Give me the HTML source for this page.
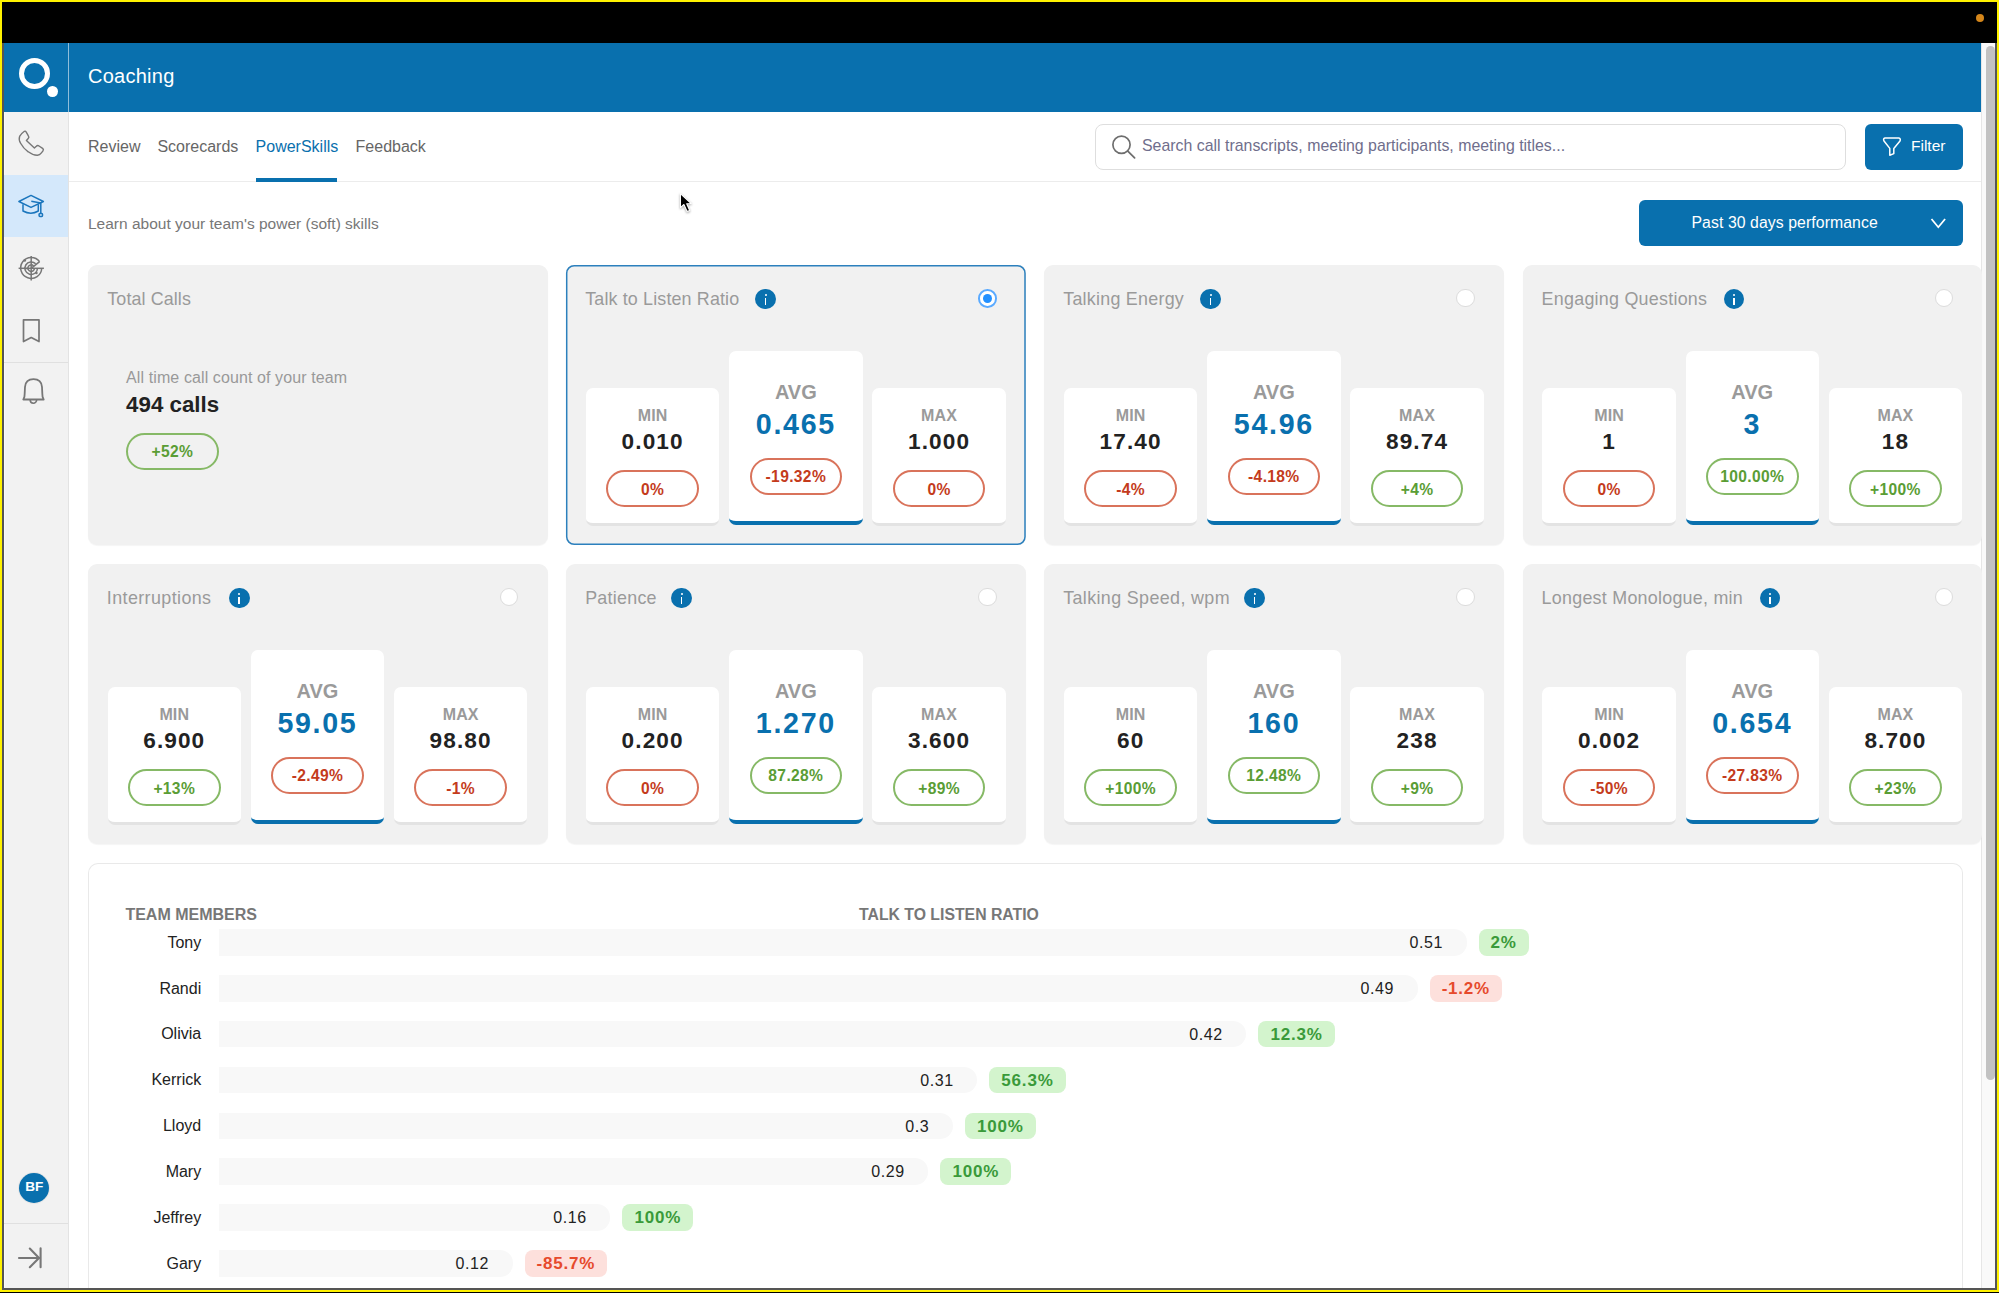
<!DOCTYPE html>
<html><head><meta charset="utf-8"><style>
html,body{margin:0;padding:0}
body{width:1999px;height:1293px;position:relative;overflow:hidden;background:#fff200;font-family:"Liberation Sans", sans-serif}
</style></head><body>
<div style="position:absolute;left:2px;top:2px;width:1995px;height:1288px;background:#555"></div>
<div style="position:absolute;left:2px;top:2px;width:1995px;height:41px;background:#000"></div>
<div style="position:absolute;left:0px;top:1292px;width:1999px;height:1px;background:#000"></div>
<div style="position:absolute;left:1976.4px;top:14.3px;width:8px;height:8px;background:#d4861a;border-radius:50%"></div>
<div style="position:absolute;left:4px;top:43px;width:1991px;height:1245px;background:#fff"></div>
<div style="position:absolute;left:3.5px;top:43px;width:1978px;height:69px;background:#0970ae"></div>
<div style="position:absolute;left:68px;top:43px;width:1px;height:69px;background:rgba(255,255,255,0.55)"></div>
<div style="position:absolute;left:18.6px;top:57.7px;width:21.4px;height:21.4px;border:5.5px solid #fff;border-radius:50%;box-sizing:content-box"></div>
<div style="position:absolute;left:47px;top:86.3px;width:10.8px;height:10.8px;background:#fff;border-radius:50%"></div>
<div style="position:absolute;left:88px;top:66.36px;font-size:20px;line-height:20px;color:#fff;font-weight:400;white-space:nowrap;letter-spacing:0.25px;">Coaching</div>
<div style="position:absolute;left:4px;top:112px;width:64px;height:1176px;background:#f2f2f2"></div>
<div style="position:absolute;left:4px;top:112px;width:1px;height:1176px;background:#fafafa"></div>
<div style="position:absolute;left:68px;top:112px;width:1px;height:1176px;background:#e3e3e3"></div>
<div style="position:absolute;left:4px;top:175px;width:64px;height:62px;background:#d4e8fb"></div>
<div style="position:absolute;left:4px;top:362px;width:64px;height:1px;background:#e0e0e0"></div>
<div style="position:absolute;left:4px;top:1223px;width:64px;height:1px;background:#e0e0e0"></div>
<div style="position:absolute;left:1981.3px;top:43px;width:13.7px;height:1245px;background:#f9f9f9;border-left:1px solid #e6e6e6;box-sizing:border-box"></div>
<div style="position:absolute;left:1986px;top:46.2px;width:8.6px;height:1034px;background:#c2c2c2;border-radius:5px"></div>
<div style="position:absolute;left:88px;top:139.45px;font-size:16px;line-height:16px;color:#666;font-weight:400;white-space:nowrap;">Review</div>
<div style="position:absolute;left:157.4px;top:139.45px;font-size:16px;line-height:16px;color:#666;font-weight:400;white-space:nowrap;">Scorecards</div>
<div style="position:absolute;left:255.6px;top:139.45px;font-size:16px;line-height:16px;color:#0970ae;font-weight:400;white-space:nowrap;">PowerSkills</div>
<div style="position:absolute;left:355.6px;top:139.45px;font-size:16px;line-height:16px;color:#666;font-weight:400;white-space:nowrap;">Feedback</div>
<div style="position:absolute;left:69px;top:180.5px;width:1912.3px;height:1.5px;background:#ececec"></div>
<div style="position:absolute;left:255.6px;top:178px;width:81.4px;height:3.5px;background:#0970ae"></div>
<div style="position:absolute;left:1095.2px;top:124px;width:751.2px;height:45.5px;border:1px solid #dedede;border-radius:8px;box-sizing:border-box;background:#fff"></div>
<svg style="position:absolute;left:1108px;top:132px" width="32" height="32" viewBox="1108 132 32 32"><circle cx="1121.5" cy="144.8" r="8.6" fill="none" stroke="#6e6e6e" stroke-width="1.7"/><line x1="1127.8" y1="151.1" x2="1134.6" y2="157.9" stroke="#6e6e6e" stroke-width="1.8" stroke-linecap="round"/></svg>
<div style="position:absolute;left:1142px;top:138.13px;font-size:15.9px;line-height:15.9px;color:#6f6e8c;font-weight:400;white-space:nowrap;">Search call transcripts, meeting participants, meeting titles...</div>
<div style="position:absolute;left:1865.3px;top:124px;width:98px;height:45.8px;background:#0970ae;border-radius:6px"></div>
<svg style="position:absolute;left:1878px;top:132px" width="28" height="28" viewBox="1878 132 28 28"><path d="M1885 138 L1898.8 138 Q1901 138.5 1900 141 L1893.8 148.4 L1893.8 153.6 L1889.8 155.2 L1889.8 148.4 L1884 141 Q1882.8 138.5 1885 138 Z" fill="none" stroke="#fff" stroke-width="1.5" stroke-linejoin="round"/></svg>
<div style="position:absolute;left:1911px;top:138.37px;font-size:15.5px;line-height:15.5px;color:#fff;font-weight:400;white-space:nowrap;">Filter</div>
<div style="position:absolute;left:88px;top:215.87px;font-size:15.5px;line-height:15.5px;color:#777;font-weight:400;white-space:nowrap;">Learn about your team's power (soft) skills</div>
<div style="position:absolute;left:1639.2px;top:200.3px;width:324px;height:45.7px;background:#0970ae;border-radius:6px"></div>
<div style="position:absolute;left:1691.5px;top:214.92px;font-size:15.8px;line-height:15.8px;color:#fff;font-weight:400;white-space:nowrap;letter-spacing:0.08px;">Past 30 days performance</div>
<svg style="position:absolute;left:1926px;top:212px" width="24" height="22" viewBox="1926 212 24 22"><polyline points="1931.5,219 1938.3,227.2 1945.1,219" fill="none" stroke="#fff" stroke-width="1.8" stroke-linejoin="miter"/></svg>
<svg style="position:absolute;left:0px;top:112px" width="68" height="1176" viewBox="0 112 68 1176"><path d="M24.4,131.3 C22.6,132.6 20.6,134.5 19.6,136.4 C18.8,138.4 19.4,141 20.6,143.3 C22.2,146.3 25,149.6 28.2,151.8 C31.2,154 34.6,155.4 37.4,155.3 C39,155.2 40.4,154.2 41.4,152.9 L43,150.8 C43.6,150 43.4,149 42.6,148.4 L39,146 C38.1,145.4 37.1,145.5 36.3,146.3 L34.4,148.1 L26.4,140.5 L28.2,138.6 C28.9,137.9 29,136.9 28.5,136.1 L26.1,131.9 C25.6,131.1 25,130.9 24.4,131.3 Z" fill="none" stroke="#777" stroke-width="1.4" stroke-linejoin="round"/><g fill="none" stroke="#1b76bd" stroke-width="1.5" stroke-linejoin="round"><path d="M18.9,201.5 L31,195.4 L43.4,201.5 L31,207.4 Z"/><path d="M23,204.3 L23,211 Q31,215.5 38.3,211 L38.3,204.3"/><path d="M31.3,201.2 L40.8,202.9 L40.8,213.2"/><rect x="39.1" y="213.4" width="3.4" height="3" rx="0.8"/></g><g fill="none" stroke="#777" stroke-width="1.5"><path d="M39.6,261.6 A10.5,10.5 0 1 0 41.7,268.3"/><path d="M35.7,263.8 A6.3,6.3 0 1 0 37.5,268.3"/><path d="M33.6,265.9 A3.3,3.3 0 1 0 34.5,268.3"/><line x1="31.2" y1="256" x2="31.2" y2="280.6"/><line x1="18.6" y1="268.3" x2="43.9" y2="268.3"/><line x1="31.2" y1="268.3" x2="39.6" y2="261.6"/></g><circle cx="24.8" cy="260.5" r="1.3" fill="#777"/><circle cx="36.4" cy="273" r="1.3" fill="#777"/><circle cx="27.2" cy="268.4" r="1" fill="#777"/><path d="M23.5,319.8 L39.0,319.8 L39.0,341.6 L31.2,337.6 L23.5,341.6 Z" fill="none" stroke="#777" stroke-width="1.7" stroke-linejoin="round"/><path d="M23.3,399.5 L43.7,399.5 L42.6,396.8 C42.2,394 42.2,390 42,387 C41.6,381.8 38,379.2 33.5,379.2 C29,379.2 25.4,381.8 25,387 C24.8,390 24.8,394 24.4,396.8 Z" fill="none" stroke="#777" stroke-width="1.8" stroke-linejoin="round"/><path d="M30.2,400 A3.2,3.2 0 0 0 36.6,400" fill="none" stroke="#777" stroke-width="1.6"/><g fill="none" stroke="#777" stroke-width="2.1" stroke-linecap="round" stroke-linejoin="round"><line x1="19" y1="1258" x2="39" y2="1258"/><polyline points="29.8,1248.6 39,1258 29.8,1267.2"/><line x1="40.6" y1="1248.4" x2="40.6" y2="1267.2"/></g></svg>
<div style="position:absolute;left:19.3px;top:1173px;width:30px;height:30px;background:#0970ae;border-radius:50%;box-shadow:0 0 0 1px #e6e6e6"></div>
<div style="position:absolute;left:14.299999999999997px;width:40px;text-align:center;top:1180.48px;font-size:13.6px;line-height:13.6px;color:#fff;font-weight:700;white-space:nowrap;">BF</div>
<div style="position:absolute;left:88px;top:265px;width:459.7px;height:280px;background:#f1f1f1;border-radius:9px;box-shadow:0 1px 1px rgba(0,0,0,0.04)"></div>
<div style="position:absolute;left:107.3px;top:290.94px;font-size:17.9px;line-height:17.9px;color:#9a9a9a;font-weight:400;white-space:nowrap;letter-spacing:0.1px;">Total Calls</div>
<div style="position:absolute;left:126.1px;top:370.45px;font-size:16px;line-height:16px;color:#999;font-weight:400;white-space:nowrap;letter-spacing:0.1px;">All time call count of your team</div>
<div style="position:absolute;left:126.1px;top:393.81px;font-size:22.3px;line-height:22.3px;color:#222;font-weight:700;white-space:nowrap;">494 calls</div>
<div style="position:absolute;left:126.10px;top:433.20px;width:92.7px;height:37.2px;border:2px solid #86b966;border-radius:20px;box-sizing:border-box"></div>
<div style="position:absolute;left:112.44999999999999px;width:120px;text-align:center;top:444.39px;font-size:15.6px;line-height:15.6px;color:#5a9d35;font-weight:700;white-space:nowrap;letter-spacing:0.35px;">+52%</div>
<div style="position:absolute;left:566.4px;top:265px;width:459.7px;height:280px;background:#f1f1f1;border-radius:8px"></div>
<svg style="position:absolute;left:565.4px;top:264px" width="461.7" height="282"><rect x="1.7" y="1.7" width="458.3" height="278.6" rx="7.5" fill="none" stroke="#2c80bd" stroke-width="1.5"/></svg>
<div style="position:absolute;left:585.1999999999999px;top:290.94px;font-size:17.9px;line-height:17.9px;color:#9a9a9a;font-weight:400;white-space:nowrap;letter-spacing:0.15px;">Talk to Listen Ratio</div>
<div style="position:absolute;left:755.20px;top:288.60px;width:20.8px;height:20.8px;border-radius:50%;background:#0970ae"></div>
<div style="position:absolute;left:764.60px;top:294.40px;width:2.0px;height:2.0px;border-radius:50%;background:#fff"></div>
<div style="position:absolute;left:764.70px;top:297.70px;width:1.8px;height:7px;background:#fff"></div>
<div style="position:absolute;left:978.10px;top:289.00px;width:18.6px;height:18.6px;border-radius:50%;background:#fff;border:2px solid #5aaaff;box-sizing:border-box"></div>
<div style="position:absolute;left:982.70px;top:293.60px;width:9.4px;height:9.4px;border-radius:50%;background:#2290ff"></div>
<div style="position:absolute;left:585.90px;top:387.50px;width:133.5px;height:138.00px;background:#fff;border-radius:7px;border-bottom:3.4px solid #e3e3e3;box-sizing:border-box"></div>
<div style="position:absolute;left:592.65px;width:120px;text-align:center;top:407.95px;font-size:16px;line-height:16px;color:#9a9a9a;font-weight:700;white-space:nowrap;letter-spacing:0.1px;">MIN</div>
<div style="position:absolute;left:587.65px;width:130px;text-align:center;top:431.16px;font-size:22.6px;line-height:22.6px;color:#222;font-weight:700;white-space:nowrap;letter-spacing:1.1px;">0.010</div>
<div style="position:absolute;left:606.40px;top:470.40px;width:92.5px;height:36.8px;border:2px solid #d9735b;border-radius:20px;box-sizing:border-box"></div>
<div style="position:absolute;left:592.65px;width:120px;text-align:center;top:481.59px;font-size:15.6px;line-height:15.6px;color:#c43b1c;font-weight:700;white-space:nowrap;letter-spacing:0.35px;">0%</div>
<div style="position:absolute;left:729.10px;top:350.60px;width:133.5px;height:174.90px;background:#fff;border-radius:7px;border-bottom:4.8px solid #0970ae;box-sizing:border-box"></div>
<div style="position:absolute;left:735.8499999999999px;width:120px;text-align:center;top:381.66px;font-size:20px;line-height:20px;color:#9a9a9a;font-weight:700;white-space:nowrap;">AVG</div>
<div style="position:absolute;left:730.8499999999999px;width:130px;text-align:center;top:409.78px;font-size:28.6px;line-height:28.6px;color:#0970ae;font-weight:700;white-space:nowrap;letter-spacing:1.7px;">0.465</div>
<div style="position:absolute;left:749.60px;top:457.90px;width:92.5px;height:36.8px;border:2px solid #d9735b;border-radius:20px;box-sizing:border-box"></div>
<div style="position:absolute;left:735.8499999999999px;width:120px;text-align:center;top:469.09px;font-size:15.6px;line-height:15.6px;color:#c43b1c;font-weight:700;white-space:nowrap;letter-spacing:0.35px;">-19.32%</div>
<div style="position:absolute;left:872.30px;top:387.50px;width:133.5px;height:138.00px;background:#fff;border-radius:7px;border-bottom:3.4px solid #e3e3e3;box-sizing:border-box"></div>
<div style="position:absolute;left:879.05px;width:120px;text-align:center;top:407.95px;font-size:16px;line-height:16px;color:#9a9a9a;font-weight:700;white-space:nowrap;letter-spacing:0.1px;">MAX</div>
<div style="position:absolute;left:874.05px;width:130px;text-align:center;top:431.16px;font-size:22.6px;line-height:22.6px;color:#222;font-weight:700;white-space:nowrap;letter-spacing:1.1px;">1.000</div>
<div style="position:absolute;left:892.80px;top:470.40px;width:92.5px;height:36.8px;border:2px solid #d9735b;border-radius:20px;box-sizing:border-box"></div>
<div style="position:absolute;left:879.05px;width:120px;text-align:center;top:481.59px;font-size:15.6px;line-height:15.6px;color:#c43b1c;font-weight:700;white-space:nowrap;letter-spacing:0.35px;">0%</div>
<div style="position:absolute;left:1044.4px;top:265px;width:459.7px;height:280px;background:#f1f1f1;border-radius:9px;box-shadow:0 1px 1px rgba(0,0,0,0.04)"></div>
<div style="position:absolute;left:1063.2px;top:290.94px;font-size:17.9px;line-height:17.9px;color:#9a9a9a;font-weight:400;white-space:nowrap;letter-spacing:0.25px;">Talking Energy</div>
<div style="position:absolute;left:1200.20px;top:288.60px;width:20.8px;height:20.8px;border-radius:50%;background:#0970ae"></div>
<div style="position:absolute;left:1209.60px;top:294.40px;width:2.0px;height:2.0px;border-radius:50%;background:#fff"></div>
<div style="position:absolute;left:1209.70px;top:297.70px;width:1.8px;height:7px;background:#fff"></div>
<div style="position:absolute;left:1456.20px;top:289.10px;width:18.4px;height:18.4px;border-radius:50%;background:#fff;border:1px solid #dcdcdc;box-sizing:border-box"></div>
<div style="position:absolute;left:1063.90px;top:387.50px;width:133.5px;height:138.00px;background:#fff;border-radius:7px;border-bottom:3.4px solid #e3e3e3;box-sizing:border-box"></div>
<div style="position:absolute;left:1070.65px;width:120px;text-align:center;top:407.95px;font-size:16px;line-height:16px;color:#9a9a9a;font-weight:700;white-space:nowrap;letter-spacing:0.1px;">MIN</div>
<div style="position:absolute;left:1065.65px;width:130px;text-align:center;top:431.16px;font-size:22.6px;line-height:22.6px;color:#222;font-weight:700;white-space:nowrap;letter-spacing:1.1px;">17.40</div>
<div style="position:absolute;left:1084.40px;top:470.40px;width:92.5px;height:36.8px;border:2px solid #d9735b;border-radius:20px;box-sizing:border-box"></div>
<div style="position:absolute;left:1070.65px;width:120px;text-align:center;top:481.59px;font-size:15.6px;line-height:15.6px;color:#c43b1c;font-weight:700;white-space:nowrap;letter-spacing:0.35px;">-4%</div>
<div style="position:absolute;left:1207.10px;top:350.60px;width:133.5px;height:174.90px;background:#fff;border-radius:7px;border-bottom:4.8px solid #0970ae;box-sizing:border-box"></div>
<div style="position:absolute;left:1213.8500000000001px;width:120px;text-align:center;top:381.66px;font-size:20px;line-height:20px;color:#9a9a9a;font-weight:700;white-space:nowrap;">AVG</div>
<div style="position:absolute;left:1208.8500000000001px;width:130px;text-align:center;top:409.78px;font-size:28.6px;line-height:28.6px;color:#0970ae;font-weight:700;white-space:nowrap;letter-spacing:1.7px;">54.96</div>
<div style="position:absolute;left:1227.60px;top:457.90px;width:92.5px;height:36.8px;border:2px solid #d9735b;border-radius:20px;box-sizing:border-box"></div>
<div style="position:absolute;left:1213.8500000000001px;width:120px;text-align:center;top:469.09px;font-size:15.6px;line-height:15.6px;color:#c43b1c;font-weight:700;white-space:nowrap;letter-spacing:0.35px;">-4.18%</div>
<div style="position:absolute;left:1350.30px;top:387.50px;width:133.5px;height:138.00px;background:#fff;border-radius:7px;border-bottom:3.4px solid #e3e3e3;box-sizing:border-box"></div>
<div style="position:absolute;left:1357.0500000000002px;width:120px;text-align:center;top:407.95px;font-size:16px;line-height:16px;color:#9a9a9a;font-weight:700;white-space:nowrap;letter-spacing:0.1px;">MAX</div>
<div style="position:absolute;left:1352.0500000000002px;width:130px;text-align:center;top:431.16px;font-size:22.6px;line-height:22.6px;color:#222;font-weight:700;white-space:nowrap;letter-spacing:1.1px;">89.74</div>
<div style="position:absolute;left:1370.80px;top:470.40px;width:92.5px;height:36.8px;border:2px solid #86b966;border-radius:20px;box-sizing:border-box"></div>
<div style="position:absolute;left:1357.0500000000002px;width:120px;text-align:center;top:481.59px;font-size:15.6px;line-height:15.6px;color:#5a9d35;font-weight:700;white-space:nowrap;letter-spacing:0.35px;">+4%</div>
<div style="position:absolute;left:1522.8px;top:265px;width:459.7px;height:280px;background:#f1f1f1;border-radius:9px;box-shadow:0 1px 1px rgba(0,0,0,0.04)"></div>
<div style="position:absolute;left:1541.6px;top:290.94px;font-size:17.9px;line-height:17.9px;color:#9a9a9a;font-weight:400;white-space:nowrap;letter-spacing:0.25px;">Engaging Questions</div>
<div style="position:absolute;left:1723.60px;top:288.60px;width:20.8px;height:20.8px;border-radius:50%;background:#0970ae"></div>
<div style="position:absolute;left:1733.00px;top:294.40px;width:2.0px;height:2.0px;border-radius:50%;background:#fff"></div>
<div style="position:absolute;left:1733.10px;top:297.70px;width:1.8px;height:7px;background:#fff"></div>
<div style="position:absolute;left:1934.60px;top:289.10px;width:18.4px;height:18.4px;border-radius:50%;background:#fff;border:1px solid #dcdcdc;box-sizing:border-box"></div>
<div style="position:absolute;left:1542.30px;top:387.50px;width:133.5px;height:138.00px;background:#fff;border-radius:7px;border-bottom:3.4px solid #e3e3e3;box-sizing:border-box"></div>
<div style="position:absolute;left:1549.05px;width:120px;text-align:center;top:407.95px;font-size:16px;line-height:16px;color:#9a9a9a;font-weight:700;white-space:nowrap;letter-spacing:0.1px;">MIN</div>
<div style="position:absolute;left:1544.05px;width:130px;text-align:center;top:431.16px;font-size:22.6px;line-height:22.6px;color:#222;font-weight:700;white-space:nowrap;letter-spacing:1.1px;">1</div>
<div style="position:absolute;left:1562.80px;top:470.40px;width:92.5px;height:36.8px;border:2px solid #d9735b;border-radius:20px;box-sizing:border-box"></div>
<div style="position:absolute;left:1549.05px;width:120px;text-align:center;top:481.59px;font-size:15.6px;line-height:15.6px;color:#c43b1c;font-weight:700;white-space:nowrap;letter-spacing:0.35px;">0%</div>
<div style="position:absolute;left:1685.50px;top:350.60px;width:133.5px;height:174.90px;background:#fff;border-radius:7px;border-bottom:4.8px solid #0970ae;box-sizing:border-box"></div>
<div style="position:absolute;left:1692.25px;width:120px;text-align:center;top:381.66px;font-size:20px;line-height:20px;color:#9a9a9a;font-weight:700;white-space:nowrap;">AVG</div>
<div style="position:absolute;left:1687.25px;width:130px;text-align:center;top:409.78px;font-size:28.6px;line-height:28.6px;color:#0970ae;font-weight:700;white-space:nowrap;letter-spacing:1.7px;">3</div>
<div style="position:absolute;left:1706.00px;top:457.90px;width:92.5px;height:36.8px;border:2px solid #86b966;border-radius:20px;box-sizing:border-box"></div>
<div style="position:absolute;left:1692.25px;width:120px;text-align:center;top:469.09px;font-size:15.6px;line-height:15.6px;color:#5a9d35;font-weight:700;white-space:nowrap;letter-spacing:0.35px;">100.00%</div>
<div style="position:absolute;left:1828.70px;top:387.50px;width:133.5px;height:138.00px;background:#fff;border-radius:7px;border-bottom:3.4px solid #e3e3e3;box-sizing:border-box"></div>
<div style="position:absolute;left:1835.4499999999998px;width:120px;text-align:center;top:407.95px;font-size:16px;line-height:16px;color:#9a9a9a;font-weight:700;white-space:nowrap;letter-spacing:0.1px;">MAX</div>
<div style="position:absolute;left:1830.4499999999998px;width:130px;text-align:center;top:431.16px;font-size:22.6px;line-height:22.6px;color:#222;font-weight:700;white-space:nowrap;letter-spacing:1.1px;">18</div>
<div style="position:absolute;left:1849.20px;top:470.40px;width:92.5px;height:36.8px;border:2px solid #86b966;border-radius:20px;box-sizing:border-box"></div>
<div style="position:absolute;left:1835.4499999999998px;width:120px;text-align:center;top:481.59px;font-size:15.6px;line-height:15.6px;color:#5a9d35;font-weight:700;white-space:nowrap;letter-spacing:0.35px;">+100%</div>
<div style="position:absolute;left:88px;top:564px;width:459.7px;height:280px;background:#f1f1f1;border-radius:9px;box-shadow:0 1px 1px rgba(0,0,0,0.04)"></div>
<div style="position:absolute;left:106.8px;top:589.94px;font-size:17.9px;line-height:17.9px;color:#9a9a9a;font-weight:400;white-space:nowrap;letter-spacing:0.4px;">Interruptions</div>
<div style="position:absolute;left:228.80px;top:587.60px;width:20.8px;height:20.8px;border-radius:50%;background:#0970ae"></div>
<div style="position:absolute;left:238.20px;top:593.40px;width:2.0px;height:2.0px;border-radius:50%;background:#fff"></div>
<div style="position:absolute;left:238.30px;top:596.70px;width:1.8px;height:7px;background:#fff"></div>
<div style="position:absolute;left:499.80px;top:588.10px;width:18.4px;height:18.4px;border-radius:50%;background:#fff;border:1px solid #dcdcdc;box-sizing:border-box"></div>
<div style="position:absolute;left:107.50px;top:686.50px;width:133.5px;height:138.00px;background:#fff;border-radius:7px;border-bottom:3.4px solid #e3e3e3;box-sizing:border-box"></div>
<div style="position:absolute;left:114.25px;width:120px;text-align:center;top:706.95px;font-size:16px;line-height:16px;color:#9a9a9a;font-weight:700;white-space:nowrap;letter-spacing:0.1px;">MIN</div>
<div style="position:absolute;left:109.25px;width:130px;text-align:center;top:730.16px;font-size:22.6px;line-height:22.6px;color:#222;font-weight:700;white-space:nowrap;letter-spacing:1.1px;">6.900</div>
<div style="position:absolute;left:128.00px;top:769.40px;width:92.5px;height:36.8px;border:2px solid #86b966;border-radius:20px;box-sizing:border-box"></div>
<div style="position:absolute;left:114.25px;width:120px;text-align:center;top:780.59px;font-size:15.6px;line-height:15.6px;color:#5a9d35;font-weight:700;white-space:nowrap;letter-spacing:0.35px;">+13%</div>
<div style="position:absolute;left:250.70px;top:649.60px;width:133.5px;height:174.90px;background:#fff;border-radius:7px;border-bottom:4.8px solid #0970ae;box-sizing:border-box"></div>
<div style="position:absolute;left:257.45px;width:120px;text-align:center;top:680.66px;font-size:20px;line-height:20px;color:#9a9a9a;font-weight:700;white-space:nowrap;">AVG</div>
<div style="position:absolute;left:252.45px;width:130px;text-align:center;top:708.78px;font-size:28.6px;line-height:28.6px;color:#0970ae;font-weight:700;white-space:nowrap;letter-spacing:1.7px;">59.05</div>
<div style="position:absolute;left:271.20px;top:756.90px;width:92.5px;height:36.8px;border:2px solid #d9735b;border-radius:20px;box-sizing:border-box"></div>
<div style="position:absolute;left:257.45px;width:120px;text-align:center;top:768.09px;font-size:15.6px;line-height:15.6px;color:#c43b1c;font-weight:700;white-space:nowrap;letter-spacing:0.35px;">-2.49%</div>
<div style="position:absolute;left:393.90px;top:686.50px;width:133.5px;height:138.00px;background:#fff;border-radius:7px;border-bottom:3.4px solid #e3e3e3;box-sizing:border-box"></div>
<div style="position:absolute;left:400.65px;width:120px;text-align:center;top:706.95px;font-size:16px;line-height:16px;color:#9a9a9a;font-weight:700;white-space:nowrap;letter-spacing:0.1px;">MAX</div>
<div style="position:absolute;left:395.65px;width:130px;text-align:center;top:730.16px;font-size:22.6px;line-height:22.6px;color:#222;font-weight:700;white-space:nowrap;letter-spacing:1.1px;">98.80</div>
<div style="position:absolute;left:414.40px;top:769.40px;width:92.5px;height:36.8px;border:2px solid #d9735b;border-radius:20px;box-sizing:border-box"></div>
<div style="position:absolute;left:400.65px;width:120px;text-align:center;top:780.59px;font-size:15.6px;line-height:15.6px;color:#c43b1c;font-weight:700;white-space:nowrap;letter-spacing:0.35px;">-1%</div>
<div style="position:absolute;left:566.4px;top:564px;width:459.7px;height:280px;background:#f1f1f1;border-radius:9px;box-shadow:0 1px 1px rgba(0,0,0,0.04)"></div>
<div style="position:absolute;left:585.1999999999999px;top:589.94px;font-size:17.9px;line-height:17.9px;color:#9a9a9a;font-weight:400;white-space:nowrap;letter-spacing:0.25px;">Patience</div>
<div style="position:absolute;left:671.20px;top:587.60px;width:20.8px;height:20.8px;border-radius:50%;background:#0970ae"></div>
<div style="position:absolute;left:680.60px;top:593.40px;width:2.0px;height:2.0px;border-radius:50%;background:#fff"></div>
<div style="position:absolute;left:680.70px;top:596.70px;width:1.8px;height:7px;background:#fff"></div>
<div style="position:absolute;left:978.20px;top:588.10px;width:18.4px;height:18.4px;border-radius:50%;background:#fff;border:1px solid #dcdcdc;box-sizing:border-box"></div>
<div style="position:absolute;left:585.90px;top:686.50px;width:133.5px;height:138.00px;background:#fff;border-radius:7px;border-bottom:3.4px solid #e3e3e3;box-sizing:border-box"></div>
<div style="position:absolute;left:592.65px;width:120px;text-align:center;top:706.95px;font-size:16px;line-height:16px;color:#9a9a9a;font-weight:700;white-space:nowrap;letter-spacing:0.1px;">MIN</div>
<div style="position:absolute;left:587.65px;width:130px;text-align:center;top:730.16px;font-size:22.6px;line-height:22.6px;color:#222;font-weight:700;white-space:nowrap;letter-spacing:1.1px;">0.200</div>
<div style="position:absolute;left:606.40px;top:769.40px;width:92.5px;height:36.8px;border:2px solid #d9735b;border-radius:20px;box-sizing:border-box"></div>
<div style="position:absolute;left:592.65px;width:120px;text-align:center;top:780.59px;font-size:15.6px;line-height:15.6px;color:#c43b1c;font-weight:700;white-space:nowrap;letter-spacing:0.35px;">0%</div>
<div style="position:absolute;left:729.10px;top:649.60px;width:133.5px;height:174.90px;background:#fff;border-radius:7px;border-bottom:4.8px solid #0970ae;box-sizing:border-box"></div>
<div style="position:absolute;left:735.8499999999999px;width:120px;text-align:center;top:680.66px;font-size:20px;line-height:20px;color:#9a9a9a;font-weight:700;white-space:nowrap;">AVG</div>
<div style="position:absolute;left:730.8499999999999px;width:130px;text-align:center;top:708.78px;font-size:28.6px;line-height:28.6px;color:#0970ae;font-weight:700;white-space:nowrap;letter-spacing:1.7px;">1.270</div>
<div style="position:absolute;left:749.60px;top:756.90px;width:92.5px;height:36.8px;border:2px solid #86b966;border-radius:20px;box-sizing:border-box"></div>
<div style="position:absolute;left:735.8499999999999px;width:120px;text-align:center;top:768.09px;font-size:15.6px;line-height:15.6px;color:#5a9d35;font-weight:700;white-space:nowrap;letter-spacing:0.35px;">87.28%</div>
<div style="position:absolute;left:872.30px;top:686.50px;width:133.5px;height:138.00px;background:#fff;border-radius:7px;border-bottom:3.4px solid #e3e3e3;box-sizing:border-box"></div>
<div style="position:absolute;left:879.05px;width:120px;text-align:center;top:706.95px;font-size:16px;line-height:16px;color:#9a9a9a;font-weight:700;white-space:nowrap;letter-spacing:0.1px;">MAX</div>
<div style="position:absolute;left:874.05px;width:130px;text-align:center;top:730.16px;font-size:22.6px;line-height:22.6px;color:#222;font-weight:700;white-space:nowrap;letter-spacing:1.1px;">3.600</div>
<div style="position:absolute;left:892.80px;top:769.40px;width:92.5px;height:36.8px;border:2px solid #86b966;border-radius:20px;box-sizing:border-box"></div>
<div style="position:absolute;left:879.05px;width:120px;text-align:center;top:780.59px;font-size:15.6px;line-height:15.6px;color:#5a9d35;font-weight:700;white-space:nowrap;letter-spacing:0.35px;">+89%</div>
<div style="position:absolute;left:1044.4px;top:564px;width:459.7px;height:280px;background:#f1f1f1;border-radius:9px;box-shadow:0 1px 1px rgba(0,0,0,0.04)"></div>
<div style="position:absolute;left:1063.2px;top:589.94px;font-size:17.9px;line-height:17.9px;color:#9a9a9a;font-weight:400;white-space:nowrap;letter-spacing:0.37px;">Talking Speed, wpm</div>
<div style="position:absolute;left:1244.20px;top:587.60px;width:20.8px;height:20.8px;border-radius:50%;background:#0970ae"></div>
<div style="position:absolute;left:1253.60px;top:593.40px;width:2.0px;height:2.0px;border-radius:50%;background:#fff"></div>
<div style="position:absolute;left:1253.70px;top:596.70px;width:1.8px;height:7px;background:#fff"></div>
<div style="position:absolute;left:1456.20px;top:588.10px;width:18.4px;height:18.4px;border-radius:50%;background:#fff;border:1px solid #dcdcdc;box-sizing:border-box"></div>
<div style="position:absolute;left:1063.90px;top:686.50px;width:133.5px;height:138.00px;background:#fff;border-radius:7px;border-bottom:3.4px solid #e3e3e3;box-sizing:border-box"></div>
<div style="position:absolute;left:1070.65px;width:120px;text-align:center;top:706.95px;font-size:16px;line-height:16px;color:#9a9a9a;font-weight:700;white-space:nowrap;letter-spacing:0.1px;">MIN</div>
<div style="position:absolute;left:1065.65px;width:130px;text-align:center;top:730.16px;font-size:22.6px;line-height:22.6px;color:#222;font-weight:700;white-space:nowrap;letter-spacing:1.1px;">60</div>
<div style="position:absolute;left:1084.40px;top:769.40px;width:92.5px;height:36.8px;border:2px solid #86b966;border-radius:20px;box-sizing:border-box"></div>
<div style="position:absolute;left:1070.65px;width:120px;text-align:center;top:780.59px;font-size:15.6px;line-height:15.6px;color:#5a9d35;font-weight:700;white-space:nowrap;letter-spacing:0.35px;">+100%</div>
<div style="position:absolute;left:1207.10px;top:649.60px;width:133.5px;height:174.90px;background:#fff;border-radius:7px;border-bottom:4.8px solid #0970ae;box-sizing:border-box"></div>
<div style="position:absolute;left:1213.8500000000001px;width:120px;text-align:center;top:680.66px;font-size:20px;line-height:20px;color:#9a9a9a;font-weight:700;white-space:nowrap;">AVG</div>
<div style="position:absolute;left:1208.8500000000001px;width:130px;text-align:center;top:708.78px;font-size:28.6px;line-height:28.6px;color:#0970ae;font-weight:700;white-space:nowrap;letter-spacing:1.7px;">160</div>
<div style="position:absolute;left:1227.60px;top:756.90px;width:92.5px;height:36.8px;border:2px solid #86b966;border-radius:20px;box-sizing:border-box"></div>
<div style="position:absolute;left:1213.8500000000001px;width:120px;text-align:center;top:768.09px;font-size:15.6px;line-height:15.6px;color:#5a9d35;font-weight:700;white-space:nowrap;letter-spacing:0.35px;">12.48%</div>
<div style="position:absolute;left:1350.30px;top:686.50px;width:133.5px;height:138.00px;background:#fff;border-radius:7px;border-bottom:3.4px solid #e3e3e3;box-sizing:border-box"></div>
<div style="position:absolute;left:1357.0500000000002px;width:120px;text-align:center;top:706.95px;font-size:16px;line-height:16px;color:#9a9a9a;font-weight:700;white-space:nowrap;letter-spacing:0.1px;">MAX</div>
<div style="position:absolute;left:1352.0500000000002px;width:130px;text-align:center;top:730.16px;font-size:22.6px;line-height:22.6px;color:#222;font-weight:700;white-space:nowrap;letter-spacing:1.1px;">238</div>
<div style="position:absolute;left:1370.80px;top:769.40px;width:92.5px;height:36.8px;border:2px solid #86b966;border-radius:20px;box-sizing:border-box"></div>
<div style="position:absolute;left:1357.0500000000002px;width:120px;text-align:center;top:780.59px;font-size:15.6px;line-height:15.6px;color:#5a9d35;font-weight:700;white-space:nowrap;letter-spacing:0.35px;">+9%</div>
<div style="position:absolute;left:1522.8px;top:564px;width:459.7px;height:280px;background:#f1f1f1;border-radius:9px;box-shadow:0 1px 1px rgba(0,0,0,0.04)"></div>
<div style="position:absolute;left:1541.6px;top:589.94px;font-size:17.9px;line-height:17.9px;color:#9a9a9a;font-weight:400;white-space:nowrap;letter-spacing:0.25px;">Longest Monologue, min</div>
<div style="position:absolute;left:1759.60px;top:587.60px;width:20.8px;height:20.8px;border-radius:50%;background:#0970ae"></div>
<div style="position:absolute;left:1769.00px;top:593.40px;width:2.0px;height:2.0px;border-radius:50%;background:#fff"></div>
<div style="position:absolute;left:1769.10px;top:596.70px;width:1.8px;height:7px;background:#fff"></div>
<div style="position:absolute;left:1934.60px;top:588.10px;width:18.4px;height:18.4px;border-radius:50%;background:#fff;border:1px solid #dcdcdc;box-sizing:border-box"></div>
<div style="position:absolute;left:1542.30px;top:686.50px;width:133.5px;height:138.00px;background:#fff;border-radius:7px;border-bottom:3.4px solid #e3e3e3;box-sizing:border-box"></div>
<div style="position:absolute;left:1549.05px;width:120px;text-align:center;top:706.95px;font-size:16px;line-height:16px;color:#9a9a9a;font-weight:700;white-space:nowrap;letter-spacing:0.1px;">MIN</div>
<div style="position:absolute;left:1544.05px;width:130px;text-align:center;top:730.16px;font-size:22.6px;line-height:22.6px;color:#222;font-weight:700;white-space:nowrap;letter-spacing:1.1px;">0.002</div>
<div style="position:absolute;left:1562.80px;top:769.40px;width:92.5px;height:36.8px;border:2px solid #d9735b;border-radius:20px;box-sizing:border-box"></div>
<div style="position:absolute;left:1549.05px;width:120px;text-align:center;top:780.59px;font-size:15.6px;line-height:15.6px;color:#c43b1c;font-weight:700;white-space:nowrap;letter-spacing:0.35px;">-50%</div>
<div style="position:absolute;left:1685.50px;top:649.60px;width:133.5px;height:174.90px;background:#fff;border-radius:7px;border-bottom:4.8px solid #0970ae;box-sizing:border-box"></div>
<div style="position:absolute;left:1692.25px;width:120px;text-align:center;top:680.66px;font-size:20px;line-height:20px;color:#9a9a9a;font-weight:700;white-space:nowrap;">AVG</div>
<div style="position:absolute;left:1687.25px;width:130px;text-align:center;top:708.78px;font-size:28.6px;line-height:28.6px;color:#0970ae;font-weight:700;white-space:nowrap;letter-spacing:1.7px;">0.654</div>
<div style="position:absolute;left:1706.00px;top:756.90px;width:92.5px;height:36.8px;border:2px solid #d9735b;border-radius:20px;box-sizing:border-box"></div>
<div style="position:absolute;left:1692.25px;width:120px;text-align:center;top:768.09px;font-size:15.6px;line-height:15.6px;color:#c43b1c;font-weight:700;white-space:nowrap;letter-spacing:0.35px;">-27.83%</div>
<div style="position:absolute;left:1828.70px;top:686.50px;width:133.5px;height:138.00px;background:#fff;border-radius:7px;border-bottom:3.4px solid #e3e3e3;box-sizing:border-box"></div>
<div style="position:absolute;left:1835.4499999999998px;width:120px;text-align:center;top:706.95px;font-size:16px;line-height:16px;color:#9a9a9a;font-weight:700;white-space:nowrap;letter-spacing:0.1px;">MAX</div>
<div style="position:absolute;left:1830.4499999999998px;width:130px;text-align:center;top:730.16px;font-size:22.6px;line-height:22.6px;color:#222;font-weight:700;white-space:nowrap;letter-spacing:1.1px;">8.700</div>
<div style="position:absolute;left:1849.20px;top:769.40px;width:92.5px;height:36.8px;border:2px solid #86b966;border-radius:20px;box-sizing:border-box"></div>
<div style="position:absolute;left:1835.4499999999998px;width:120px;text-align:center;top:780.59px;font-size:15.6px;line-height:15.6px;color:#5a9d35;font-weight:700;white-space:nowrap;letter-spacing:0.35px;">+23%</div>
<div style="position:absolute;left:87.9px;top:863.3px;width:1875.1px;height:424.7px;border:1.5px solid #e9e9e9;border-bottom:none;border-radius:10px 10px 0 0;box-sizing:border-box;background:#fff"></div>
<div style="position:absolute;left:125.4px;top:907.25px;font-size:16px;line-height:16px;color:#777;font-weight:700;white-space:nowrap;">TEAM MEMBERS</div>
<div style="position:absolute;left:859px;top:907.02px;font-size:15.8px;line-height:15.8px;color:#777;font-weight:700;white-space:nowrap;">TALK TO LISTEN RATIO</div>
<div style="position:absolute;left:219.1px;top:929.10px;width:1247.46px;height:26.6px;background:#f8f8f8;border-radius:0 13px 13px 0"></div>
<div style="position:absolute;left:51.19999999999999px;width:150px;text-align:right;top:934.75px;font-size:16px;line-height:16px;color:#222;font-weight:400;white-space:nowrap;">Tony</div>
<div style="position:absolute;left:1342.96px;width:100px;text-align:right;top:935.15px;font-size:16px;line-height:16px;color:#222;font-weight:400;white-space:nowrap;letter-spacing:0.6px;">0.51</div>
<div style="position:absolute;left:1478.56px;top:929.10px;height:26.6px;padding:0 12px;background:#d3f4cd;border-radius:8px;box-sizing:border-box;font-size:17px;letter-spacing:0.8px;line-height:26.6px;font-weight:700;color:#3a9a3a;white-space:nowrap;padding-top:1px">2%</div>
<div style="position:absolute;left:219.1px;top:974.96px;width:1198.54px;height:26.6px;background:#f8f8f8;border-radius:0 13px 13px 0"></div>
<div style="position:absolute;left:51.19999999999999px;width:150px;text-align:right;top:980.61px;font-size:16px;line-height:16px;color:#222;font-weight:400;white-space:nowrap;">Randi</div>
<div style="position:absolute;left:1294.04px;width:100px;text-align:right;top:981.01px;font-size:16px;line-height:16px;color:#222;font-weight:400;white-space:nowrap;letter-spacing:0.6px;">0.49</div>
<div style="position:absolute;left:1429.64px;top:974.96px;height:26.6px;padding:0 12px;background:#fde0dc;border-radius:8px;box-sizing:border-box;font-size:17px;letter-spacing:0.8px;line-height:26.6px;font-weight:700;color:#e64a2c;white-space:nowrap;padding-top:1px">-1.2%</div>
<div style="position:absolute;left:219.1px;top:1020.82px;width:1027.32px;height:26.6px;background:#f8f8f8;border-radius:0 13px 13px 0"></div>
<div style="position:absolute;left:51.19999999999999px;width:150px;text-align:right;top:1026.47px;font-size:16px;line-height:16px;color:#222;font-weight:400;white-space:nowrap;">Olivia</div>
<div style="position:absolute;left:1122.82px;width:100px;text-align:right;top:1026.87px;font-size:16px;line-height:16px;color:#222;font-weight:400;white-space:nowrap;letter-spacing:0.6px;">0.42</div>
<div style="position:absolute;left:1258.42px;top:1020.82px;height:26.6px;padding:0 12px;background:#d3f4cd;border-radius:8px;box-sizing:border-box;font-size:17px;letter-spacing:0.8px;line-height:26.6px;font-weight:700;color:#3a9a3a;white-space:nowrap;padding-top:1px">12.3%</div>
<div style="position:absolute;left:219.1px;top:1066.68px;width:758.26px;height:26.6px;background:#f8f8f8;border-radius:0 13px 13px 0"></div>
<div style="position:absolute;left:51.19999999999999px;width:150px;text-align:right;top:1072.33px;font-size:16px;line-height:16px;color:#222;font-weight:400;white-space:nowrap;">Kerrick</div>
<div style="position:absolute;left:853.76px;width:100px;text-align:right;top:1072.73px;font-size:16px;line-height:16px;color:#222;font-weight:400;white-space:nowrap;letter-spacing:0.6px;">0.31</div>
<div style="position:absolute;left:989.36px;top:1066.68px;height:26.6px;padding:0 12px;background:#d3f4cd;border-radius:8px;box-sizing:border-box;font-size:17px;letter-spacing:0.8px;line-height:26.6px;font-weight:700;color:#3a9a3a;white-space:nowrap;padding-top:1px">56.3%</div>
<div style="position:absolute;left:219.1px;top:1112.54px;width:733.80px;height:26.6px;background:#f8f8f8;border-radius:0 13px 13px 0"></div>
<div style="position:absolute;left:51.19999999999999px;width:150px;text-align:right;top:1118.19px;font-size:16px;line-height:16px;color:#222;font-weight:400;white-space:nowrap;">Lloyd</div>
<div style="position:absolute;left:829.3px;width:100px;text-align:right;top:1118.59px;font-size:16px;line-height:16px;color:#222;font-weight:400;white-space:nowrap;letter-spacing:0.6px;">0.3</div>
<div style="position:absolute;left:964.90px;top:1112.54px;height:26.6px;padding:0 12px;background:#d3f4cd;border-radius:8px;box-sizing:border-box;font-size:17px;letter-spacing:0.8px;line-height:26.6px;font-weight:700;color:#3a9a3a;white-space:nowrap;padding-top:1px">100%</div>
<div style="position:absolute;left:219.1px;top:1158.40px;width:709.34px;height:26.6px;background:#f8f8f8;border-radius:0 13px 13px 0"></div>
<div style="position:absolute;left:51.19999999999999px;width:150px;text-align:right;top:1164.05px;font-size:16px;line-height:16px;color:#222;font-weight:400;white-space:nowrap;">Mary</div>
<div style="position:absolute;left:804.8399999999999px;width:100px;text-align:right;top:1164.45px;font-size:16px;line-height:16px;color:#222;font-weight:400;white-space:nowrap;letter-spacing:0.6px;">0.29</div>
<div style="position:absolute;left:940.44px;top:1158.40px;height:26.6px;padding:0 12px;background:#d3f4cd;border-radius:8px;box-sizing:border-box;font-size:17px;letter-spacing:0.8px;line-height:26.6px;font-weight:700;color:#3a9a3a;white-space:nowrap;padding-top:1px">100%</div>
<div style="position:absolute;left:219.1px;top:1204.26px;width:391.36px;height:26.6px;background:#f8f8f8;border-radius:0 13px 13px 0"></div>
<div style="position:absolute;left:51.19999999999999px;width:150px;text-align:right;top:1209.91px;font-size:16px;line-height:16px;color:#222;font-weight:400;white-space:nowrap;">Jeffrey</div>
<div style="position:absolute;left:486.86px;width:100px;text-align:right;top:1210.31px;font-size:16px;line-height:16px;color:#222;font-weight:400;white-space:nowrap;letter-spacing:0.6px;">0.16</div>
<div style="position:absolute;left:622.46px;top:1204.26px;height:26.6px;padding:0 12px;background:#d3f4cd;border-radius:8px;box-sizing:border-box;font-size:17px;letter-spacing:0.8px;line-height:26.6px;font-weight:700;color:#3a9a3a;white-space:nowrap;padding-top:1px">100%</div>
<div style="position:absolute;left:219.1px;top:1250.12px;width:293.52px;height:26.6px;background:#f8f8f8;border-radius:0 13px 13px 0"></div>
<div style="position:absolute;left:51.19999999999999px;width:150px;text-align:right;top:1255.77px;font-size:16px;line-height:16px;color:#222;font-weight:400;white-space:nowrap;">Gary</div>
<div style="position:absolute;left:389.02px;width:100px;text-align:right;top:1256.17px;font-size:16px;line-height:16px;color:#222;font-weight:400;white-space:nowrap;letter-spacing:0.6px;">0.12</div>
<div style="position:absolute;left:524.62px;top:1250.12px;height:26.6px;padding:0 12px;background:#fde0dc;border-radius:8px;box-sizing:border-box;font-size:17px;letter-spacing:0.8px;line-height:26.6px;font-weight:700;color:#e64a2c;white-space:nowrap;padding-top:1px">-85.7%</div>
<svg style="position:absolute;left:670px;top:186px;filter:drop-shadow(0 1px 1.2px rgba(0,0,0,0.35))" width="30" height="32" viewBox="670 186 30 32"><path d="M680.4,193.6 L680.5,207.6 L683.9,204.5 L687.1,211.6 L689.7,210.5 L686.7,203.7 L691.2,203.5 Z" fill="#000" stroke="#fff" stroke-width="1.1" stroke-linejoin="round"/></svg>
</body></html>
